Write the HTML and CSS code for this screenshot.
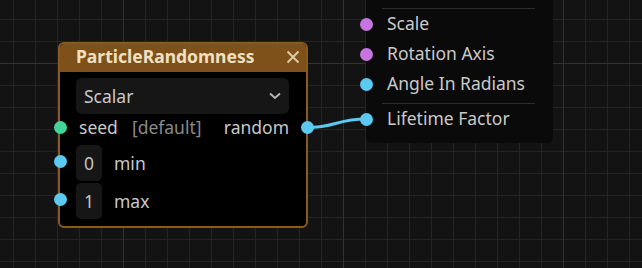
FILE: index.html
```html
<!DOCTYPE html>
<html>
<head>
<meta charset="utf-8">
<link rel="stylesheet" href="styles.css">
</head>
<body>
<div class="canvas">
  <svg class="wires" width="642" height="268" viewBox="0 0 642 268">
    <path d="M307 127.5 C 336 127.5, 337 119, 366 119" fill="none" stroke="#5bc8ef" stroke-width="3"/>
  </svg>

  <div class="node target">
    <div class="sep"></div>
    <div class="trow"><span class="pin purple"></span>Scale</div>
    <div class="trow"><span class="pin purple"></span>Rotation Axis</div>
    <div class="trow"><span class="pin blue"></span>Angle In Radians</div>
    <div class="sep gap"></div>
    <div class="trow"><span class="pin blue"></span>Lifetime Factor</div>
  </div>

  <div class="node source">
    <div class="header">
      <span class="title">ParticleRandomness</span>
      <svg class="close" width="14" height="14" viewBox="0 0 14 14">
        <path d="M1.5 1.5 L12.5 12.5 M12.5 1.5 L1.5 12.5" stroke="#dccaa6" stroke-width="2" fill="none"/>
      </svg>
    </div>
    <div class="body">
      <div class="select">
        <span>Scalar</span>
        <svg width="12" height="8" viewBox="0 0 12 8"><path d="M1 1.5 L6 6 L11 1.5" stroke="#b5b5b5" stroke-width="2" fill="none"/></svg>
      </div>
      <div class="row seed">
        <span class="pin green in"></span>
        <span class="lbl">seed</span>
        <span class="dim">[default]</span>
        <span class="out-lbl">random</span>
        <span class="pin blue out"></span>
      </div>
      <div class="row num">
        <span class="pin blue in"></span>
        <span class="box">0</span>
        <span class="lbl">min</span>
      </div>
      <div class="row num tight">
        <span class="pin blue in"></span>
        <span class="box">1</span>
        <span class="lbl">max</span>
      </div>
    </div>
  </div>
</div>
</body>
</html>
```
FILE: styles.css
```css
* { box-sizing: border-box; }
html, body { margin: 0; padding: 0; background: #131313; }
.canvas {
  position: relative;
  width: 642px;
  height: 268px;
  overflow: hidden;
  font-family: "Noto Sans", "Open Sans", sans-serif;
  font-size: 17.5px;
  color: #c9c9c9;
  background-color: #131313;
  background-image:
    linear-gradient(to right, #323232 1px, transparent 1px),
    linear-gradient(to bottom, #323232 1px, transparent 1px),
    linear-gradient(to right, #242424 1px, transparent 1px),
    linear-gradient(to bottom, #242424 1px, transparent 1px);
  background-size: 220px 220px, 220px 220px, 22px 22px, 22px 22px;
  background-position: 123px 63px, 123px 63px, 13px 19px, 13px 19px;
}
.wires { position: absolute; left: 0; top: 0; }
.node { position: absolute; }

/* target node (right) */
.target {
  left: 366px;
  top: -10px;
  width: 187px;
  height: 153px;
  background: #0a0a0a;
  border-radius: 6px;
  padding: 18px 18px 0 16px;
  display: flex;
  flex-direction: column;
}
.sep { height: 1px; background: #2c2c2c; }
.sep.gap { margin-top: 4px; }
.trow {
  position: relative;
  height: 30px;
  display: flex;
  align-items: center;
  padding-left: 5px;
  line-height: 1;
  color: #c9c9c9;
}
.trow .pin { left: -16px; }

.pin {
  position: absolute;
  width: 13px;
  height: 13px;
  border-radius: 50%;
  top: 50%;
  margin-top: -6.5px;
  margin-left: -6.5px;
}
.purple { background: #c874e0; }
.blue { background: #5bc9f0; }
.green { background: #42d59a; }

/* source node (left) */
.source {
  left: 58px;
  top: 42px;
  width: 250px;
  height: 186px;
  border: 2px solid #895a1d;
  border-radius: 6px;
  background: #000;
  display: flex;
  flex-direction: column;
}
.header {
  height: 28px;
  background: #7d5119;
  display: flex;
  align-items: flex-start;
  justify-content: space-between;
  padding: 0 6px 0 16px;
  border-radius: 4px 4px 0 0;
}
.title {
  line-height: 24px;
  font-weight: 700;
  color: #f0e1c2;
  font-size: 17.5px;
}
.close { margin-top: 6px; }
.body {
  flex: 1;
  padding: 6px 17px 0 16px;
  display: flex;
  flex-direction: column;
}
.select {
  height: 36px;
  background: #161616;
  border-radius: 6px;
  display: flex;
  align-items: center;
  justify-content: space-between;
  padding: 0 8px 0 8px;
  color: #c9c9c9;
}
.row {
  position: relative;
  display: flex;
  align-items: center;
}
.row .pin.in { left: -16px; }
.row .pin.out { left: auto; right: -18px; margin-left: 0; margin-right: -6.5px; }
.seed { height: 26px; padding-left: 3px; }
.seed .lbl { margin-right: 14px; }
.dim { color: #8a8a8a; }
.out-lbl { margin-left: auto; }
.num { height: 36px; margin-top: 5px; }
.num.tight { margin-top: 2px; }
.num .pin { margin-top: -8px; }
.box {
  width: 26px;
  height: 36px;
  background: #161616;
  border-radius: 5px;
  display: flex;
  align-items: center;
  justify-content: center;
  color: #c4c4c4;
  margin-right: 12px;
}
```
